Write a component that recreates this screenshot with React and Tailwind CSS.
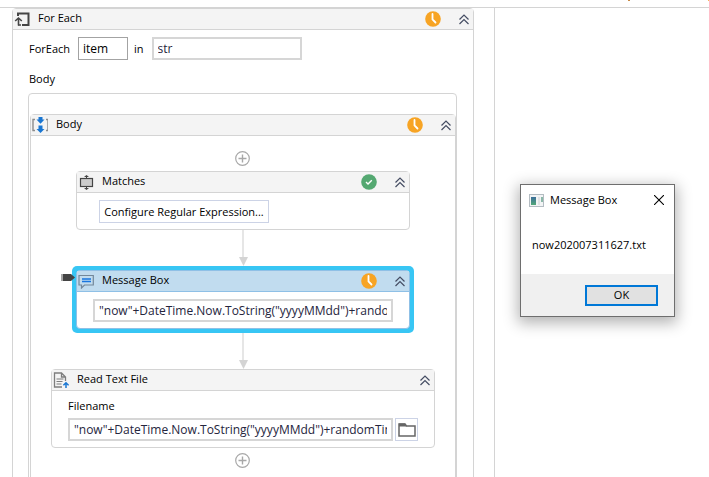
import React, { useState } from 'react';

const ClockBadge = () => (
    <svg width="16" height="16" viewBox="0 0 16 16" role="img" aria-label="Running">
        <circle cx="8" cy="8" r="7.8" fill="#f7a424" />
        <path d="M7.500 3v5.500l3 3" fill="none" stroke="#fff" strokeWidth="1.800" strokeLinecap="round" />
    </svg>
);

const DoneBadge = () => (
    <svg width="16" height="16" viewBox="0 0 16 16" role="img" aria-label="Done">
        <circle cx="8" cy="8" r="7.8" fill="#54a871" />
        <path d="M5 8.1l2 1.9 3.8-3.7" fill="none" stroke="#fff" strokeWidth="1.4" />
    </svg>
);

const PlusButton = () => (
    <button type="button" aria-label="Add activity" className="block">
        <svg width="16" height="15" viewBox="0 0 16 15" fill="none" stroke="#a8a8a8">
            <circle cx="7.5" cy="7.5" r="6.8" strokeWidth="1.2" />
            <path d="M7.5 3.5v8M3.5 7.5h8" strokeWidth="1.4" />
        </svg>
    </button>
);

const LoopIcon = () => (
    <svg width="16" height="16" viewBox="0 0 16 16" fill="none" stroke="#454545">
        <path d="M4 5V2.500h10.500V14H8" strokeWidth="2" />
        <path d="M4.500 14.500V7.500M1.200 10L4.500 7l3.300 3" strokeWidth="1.600" />
        <path d="M4 14h3" strokeWidth="1.500" />
    </svg>
);

const SequenceIcon = () => (
    <svg width="16" height="16" viewBox="0 0 16 16" fill="none">
        <path d="M3 2.500H1v11h2M14 2.500h2v11h-2" stroke="#8c8c8c" strokeWidth="1.400" />
        <path d="M6.500 0h4v2.500h2l-4 4.300-4-4.300h2zM6.500 8.500h4v3.500h2l-4 4-4-4h2z" fill="#1976d2" />
    </svg>
);

const MatchesIcon = () => (
    <svg width="16" height="16" viewBox="0 0 16 16">
        <rect x="2.500" y="4.500" width="12" height="8" fill="#ccc" stroke="#454545" strokeWidth="1.200" />
        <path d="M8.500 1l2.500 2H6zM8.500 16l2.500-2H6z" fill="#454545" />
        <path d="M8.500 2v2.500M8.500 12.500V15" stroke="#454545" />
    </svg>
);

const MessageIcon = () => (
    <svg width="16" height="16" viewBox="0 0 16 16" fill="none">
        <path d="M1 2.500h14.300v9.500H6.500l-3 3v-3H1z" stroke="#74889a" strokeWidth="1.200" />
        <path d="M4 6h9M4 8.500h9" stroke="#1976e0" strokeWidth="1.300" />
    </svg>
);

const TextFileIcon = () => (
    <svg width="16" height="16" viewBox="0 0 16 16" fill="none">
        <path d="M9 15H1.500V1h7l4 4v4M8.500 1v4h4" stroke="#7d7d7d" strokeWidth="1.300" />
        <path d="M3.500 7h7M3.500 9.500h6M3.500 12h5" stroke="#7d7d7d" />
        <path d="M13 16v-5M10.400 13.300L13 10.700l2.600 2.600" stroke="#1976d2" strokeWidth="1.500" />
    </svg>
);

const FolderIcon = () => (
    <svg width="18" height="14" viewBox="0 0 18 14">
        <path d="M1 1h6l1.500 2H17v10H1z" fill="#fff" stroke="#666" strokeWidth="1.500" />
        <path d="M1 .5h6L8.500 3.500H1z" fill="#666" />
    </svg>
);

const WindowIcon = () => (
    <svg width="15" height="13" viewBox="0 0 15 13">
        <defs>
            <linearGradient id="pane" x1="0" y1="0" x2="0" y2="1">
                <stop offset="0" stopColor="#3c6e9a" />
                <stop offset="1" stopColor="#52a878" />
            </linearGradient>
        </defs>
        <rect x=".5" y=".5" width="14" height="12" fill="#f2f4f5" stroke="#b4bcc2" />
        <rect x="2" y="3" width="5" height="8" fill="url(#pane)" />
        <rect x="9" y="3" width="2" height="8" fill="#dfe2e4" />
        <rect x="12" y="3" width="2" height="5" fill="#8bb8a8" />
    </svg>
);

const Connector = () => (
    <div className="flex h-9 flex-col items-center">
        <div className="w-[2px] flex-1 bg-[#e6e6e6]" />
        <svg width="9" height="9" viewBox="0 0 9 9">
            <path d="M0 0h9L4.500 9z" fill="#d4d4d4" />
        </svg>
    </div>
);

const Activity = ({ title, icon, badge, selected, className, children }) => {
    const [open, setOpen] = useState(true);
    const line = selected ? 'border-[#8fc0e6]' : 'border-[#d4d4d4]';

    return (
        <section className={`max-w-full rounded-sm border bg-white ${line} ${className}`}>
            <header className={`flex h-[21px] items-center border-b pr-1 pl-px ${line} ${selected ? 'bg-[#c1dcef]' : 'bg-[#f4f4f4]'}`}>
                {icon}
                <h2 className="ml-2 flex-1 pb-[2px]">{title}</h2>
                {badge}
                <button
                    type="button"
                    aria-label={`Collapse ${title}`}
                    onClick={() => setOpen(!open)}
                    className="ml-[18px]"
                >
                    <svg width="10" height="11" viewBox="0 0 10 11" fill="none" stroke="#454d63" strokeWidth="1.200">
                        <path d="M.5 5.500L5 1l4.500 4.500M.5 10L5 5.500 9.500 10" />
                    </svg>
                </button>
            </header>
            {open && children}
        </section>
    );
};

const Expression = ({ value, className, ...rest }) => (
    <input
        type="text"
        defaultValue={value}
        className={`h-[23px] border-2 border-[#d6d6d6] bg-white px-1 text-[12px] text-[#25253d] outline-none ${className}`}
        {...rest}
    />
);

const MessageDialog = () => (
    <div
        role="dialog"
        aria-labelledby="dialog-title"
        className="h-[133px] w-[155px] border border-[#6e6e6e] bg-white shadow-[0_4px_14px_2px_rgba(0,0,0,0.3)]"
    >
        <div className="flex h-[30px] items-center pr-[10px] pl-2">
            <WindowIcon />
            <h2 id="dialog-title" className="ml-[6px] flex-1">Message Box</h2>
            <button type="button" aria-label="Close">
                <svg width="10" height="10" viewBox="0 0 10 10" stroke="#000" strokeWidth="1.100">
                    <path d="M0 0l10 10M10 0L0 10" />
                </svg>
            </button>
        </div>
        <p className="h-[59px] pt-[22px] pl-[11px]">now202007311627.txt</p>
        <div className="flex h-[42px] items-center justify-end bg-[#f0f0f0] pr-4">
            <button type="button" className="h-[21px] w-[73px] border-2 border-[#0078d7] bg-[#e1e1e1] leading-4">
                OK
            </button>
        </div>
    </div>
);

const App = () => {
    return (
        <div className="flex h-screen flex-col overflow-hidden bg-white font-['Open_Sans',sans-serif] text-[11px] leading-4 text-black">
            <div className="flex h-2 shrink-0 items-start justify-end border-b border-[#d4d4d4]">
                <span className="mr-[78px] h-px w-[2px] bg-[#c98a45]" />
                <span className="h-px w-px bg-[#f7b95a]" />
            </div>

            <div className="flex min-h-0 flex-1">
                <main className="min-w-0 flex-1 pr-5 pl-3">
                    <Activity title="For Each" icon={<LoopIcon />} badge={<ClockBadge />} className="h-[500px]">
                        <div className="flex items-center pt-[7px] pl-4">
                            <label htmlFor="item">ForEach</label>
                            <input
                                id="item"
                                type="text"
                                defaultValue="item"
                                className="ml-2 h-[23px] w-[50px] border border-[#a3a3a3] px-1 text-[12px] outline-none"
                            />
                            <label htmlFor="list" className="ml-[6px]">in</label>
                            <Expression id="list" value="str" className="ml-2 w-[150px]" />
                        </div>
                        <h3 className="mt-[11px] mb-[6px] ml-4">Body</h3>

                        {/* Loop body */}
                        <div className="mr-4 ml-[15px] h-[420px] rounded-sm border border-[#d4d4d4] pt-5 pl-px">
                            <Activity title="Body" icon={<SequenceIcon />} badge={<ClockBadge />} className="h-[400px]">
                                <div className="flex flex-col items-center pt-[15px]">
                                    <PlusButton />

                                    <Activity title="Matches" icon={<MatchesIcon />} badge={<DoneBadge />} className="mt-[5px] w-[334px]">
                                        <div className="pt-[7px] pb-[6px] pl-[22px]">
                                            <button type="button" className="block h-[23px] w-[170px] border border-[#ccd3e6]">
                                                Configure Regular Expression...
                                            </button>
                                        </div>
                                    </Activity>

                                    <Connector />

                                    <div className="flex items-start">
                                        <svg width="14" height="9" viewBox="0 0 14 9" className="z-10 mt-[7px] -mr-[3px] -ml-[11px]">
                                            <path d="M0 1h2v7H0z" fill="#a6a6a6" />
                                            <path d="M2 1h8l4 3.500L10 8H2z" fill="#444" />
                                        </svg>
                                        <div className="rounded-[5px] bg-[#38c6f4] p-1">
                                            <Activity title="Message Box" icon={<MessageIcon />} badge={<ClockBadge />} selected className="w-[334px]">
                                                <div className="px-4 pt-[7px] pb-[6px]">
                                                    <Expression
                                                        aria-label="Text"
                                                        value={'"now"+DateTime.Now.ToString("yyyyMMdd")+randomTime'}
                                                        className="block w-full"
                                                    />
                                                </div>
                                            </Activity>
                                        </div>
                                    </div>

                                    <Connector />

                                    <Activity title="Read Text File" icon={<TextFileIcon />} className="mb-[5px] w-[384px]">
                                        <div className="px-4 pt-[7px] pb-[6px]">
                                            <label htmlFor="filename" className="mb-[4px] block">Filename</label>
                                            <div className="flex gap-[2px]">
                                                <Expression
                                                    id="filename"
                                                    value={'"now"+DateTime.Now.ToString("yyyyMMdd")+randomTime'}
                                                    className="min-w-0 flex-1"
                                                />
                                                <button
                                                    type="button"
                                                    aria-label="Browse"
                                                    className="flex size-[23px] items-center justify-center border border-[#ccd3e6]"
                                                >
                                                    <FolderIcon />
                                                </button>
                                            </div>
                                        </div>
                                    </Activity>
                                    <PlusButton />
                                </div>
                            </Activity>
                        </div>
                    </Activity>
                </main>

                <aside className="w-[215px] shrink-0 border-l border-[#d4d4d4] pt-44 pl-[25px]">
                    <MessageDialog />
                </aside>
            </div>
        </div>
    );
};

export default App;
